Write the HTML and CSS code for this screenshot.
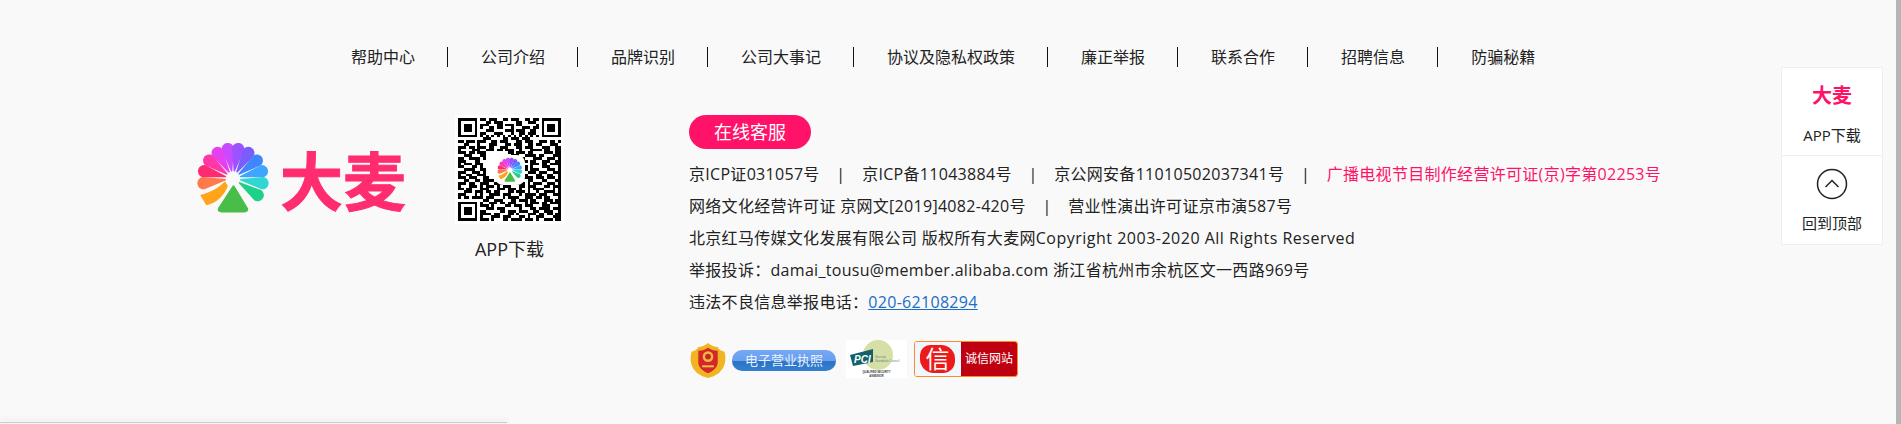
FILE: index.html
```html
<!DOCTYPE html>
<html lang="zh-CN">
<head>
    <meta charset="UTF-8">
    <meta name="viewport" content="width=device-width, initial-scale=1.0">
    <title>大麦网</title>
    <link rel="stylesheet" href="styles.css">
</head>
<body>
    <svg class="defs" width="0" height="0">
        <symbol id="fan" viewBox="-36 -35.500 73 71">
            <g id="petals">
                <path fill="#c94bff" transform="rotate(-10)" d="M-.6-7-6-29A6 6 0 0 1 6-29L.6-7Z"/>
                <path fill="#e43ff0" transform="rotate(-31)" d="M-.6-7-6-29A6 6 0 0 1 6-29L.6-7Z"/>
                <path fill="#ff38a8" transform="rotate(-53)" d="M-.6-7-6-29A6 6 0 0 1 6-29L.6-7Z"/>
                <path fill="#ff2a72" transform="rotate(-76)" d="M-.6-7-6-29A6 6 0 0 1 6-29L.6-7Z"/>
                <path fill="#ff7a4a" transform="rotate(-99)" d="M-.6-7-6-29A6 6 0 0 1 6-29L.6-7Z"/>
                <path fill="#9c52ff" transform="rotate(10)" d="M-.6-7-6-29A6 6 0 0 1 6-29L.6-7Z"/>
                <path fill="#7a5cff" transform="rotate(31)" d="M-.6-7-6-29A6 6 0 0 1 6-29L.6-7Z"/>
                <path fill="#3f86ff" transform="rotate(53)" d="M-.6-7-6-29A6 6 0 0 1 6-29L.6-7Z"/>
                <path fill="#3fa6ff" transform="rotate(76)" d="M-.6-7-6-29A6 6 0 0 1 6-29L.6-7Z"/>
                <path fill="#2fd6d2" transform="rotate(99)" d="M-.6-7-6-29A6 6 0 0 1 6-29L.6-7Z"/>
                <path fill="#1fd08a" transform="rotate(124)" d="M-.6-7-6-29A6 6 0 0 1 6-29L.6-7Z"/>
            </g>
            <path fill="#ffa41c" d="M-8 3C-14 9-22 14-32 16L-26 26C-16 24-8 16-5 7Z"/>
            <path fill="#49bd4a" d="M-1 8C0 6 1 6 2 8L14 28C16 31 14 33 11 33H-11C-14 33-16 31-14 28Z"/>
        </symbol>
    </svg>

    <nav class="top-links">
        <a>帮助中心</a><a>公司介绍</a><a>品牌识别</a><a>公司大事记</a><a>协议及隐私权政策</a><a>廉正举报</a><a>联系合作</a><a>招聘信息</a><a>防骗秘籍</a>
    </nav>

    <div class="footer-main">
        <div class="logo">
            <svg class="logo-fan"><use href="#fan"/></svg>
            <span class="logo-word">大麦</span>
        </div>

        <div class="app-code">
            <div class="qr">
                <svg id="qrCode" viewBox="0 0 37 37" shape-rendering="crispEdges"></svg>
                <div class="qr-center"><svg><use href="#fan"/></svg></div>
            </div>
            <p>APP下载</p>
        </div>

        <div class="info">
            <a class="service-btn">在线客服</a>
            <p>京ICP证031057号<span class="sep">|</span>京ICP备11043884号<span class="sep">|</span>京公网安备11010502037341号<span class="sep">|</span><span class="hot">广播电视节目制作经营许可证(京)字第02253号</span></p>
            <p>网络文化经营许可证 京网文[2019]4082-420号<span class="sep">|</span>营业性演出许可证京市演587号</p>
            <p>北京红马传媒文化发展有限公司 版权所有大麦网<span class="copyright">Copyright 2003-2020 All Rights Reserved</span></p>
            <p>举报投诉：damai_tousu@member.alibaba.com 浙江省杭州市余杭区文一西路969号</p>
            <p>违法不良信息举报电话：<a class="tel">020-62108294</a></p>

            <div class="badges">
                <div class="license">
                    <svg class="seal" viewBox="0 0 38 36">
                        <path fill="#f2b522" d="M19 0C22 3 26 4 29 4C30 7 33 8 36 9C38 17 37 25 30 31C26 34 22 35 19 36C16 35 12 34 8 31C1 25 0 17 2 9C5 8 8 7 9 4C12 4 16 3 19 0Z"/>
                        <path fill="#d3272a" d="M19 5C22 7 25 8 29 8V20C29 25 24 29 19 31C14 29 9 25 9 20V8C13 8 16 7 19 5Z"/>
                        <circle cx="19" cy="14" r="5.500" fill="#f0b840"/>
                        <circle cx="19" cy="14" r="3" fill="#c9242a"/>
                        <rect x="13" y="23" width="12" height="2" fill="#f3c24d"/>
                    </svg>
                    <span class="license-btn">电子营业执照</span>
                </div>
                <svg class="pci" viewBox="0 0 61 38">
                    <rect width="61" height="38" fill="#fff"/>
                    <circle cx="32" cy="15" r="15" fill="#d5dfa6"/>
                    <path fill="#14606a" d="M4 15 27 9 27 22 7 26Z"/>
                    <text x="8" y="23" class="pci-mark">PCI</text>
                    <text x="29" y="18" class="pci-small">Security</text>
                    <text x="29" y="22" class="pci-small">Standards Council</text>
                    <text x="30.500" y="33" text-anchor="middle" class="pci-note">QUALIFIED SECURITY</text>
                    <text x="30.500" y="37" text-anchor="middle" class="pci-note">ASSESSOR</text>
                </svg>
                <div class="trust">
                    <div class="trust-mark"><span>信</span></div>
                    <span class="trust-name">诚信网站</span>
                </div>
            </div>
        </div>
    </div>

    <aside class="side-bar">
        <div class="side-item">
            <strong>大麦</strong>
            <span>APP下载</span>
        </div>
        <div class="side-item">
            <svg class="to-top" viewBox="0 0 32 32">
                <circle cx="16" cy="16" r="14.500" fill="none" stroke="#222" stroke-width="1.500"/>
                <path d="M9.500 19 16 12.500 22.500 19" fill="none" stroke="#222" stroke-width="1.500"/>
            </svg>
            <span>回到顶部</span>
        </div>
    </aside>

    <div class="scroll-thumb"></div>
    <div class="bottom-edge"></div>

    <script src="qr.js"></script>
</body>
</html>
```

FILE: styles.css
```css
* {
    box-sizing: border-box;
}

html, body {
    height: 424px;
    overflow: hidden;
}

body {
    margin: 0;
    background-color: #f9f9f9;
    color: #222;
    font-family: "Open Sans", "Noto Sans CJK SC", sans-serif;
}

p {
    margin: 0;
}

.defs {
    display: block;
    height: 0;
}

.top-links {
    display: flex;
    padding: 47px 0 0 318px;
    font-size: 16px;
    line-height: 20px;
}

.top-links a {
    padding: 0 32px 0 33px;
    border-right: 1px solid #111;
    height: 20px;
}

.top-links a:last-child {
    border-right: none;
}

.footer-main {
    display: flex;
    padding: 48px 0 0 196px;
}

.logo {
    display: flex;
    align-items: center;
    width: 210px;
    height: 68px;
    margin-top: 29px;
    gap: 9px;
}

.logo-fan {
    width: 75px;
    height: 73px;
    flex: none;
}

.logo-word {
    color: #ff2d6f;
    font-family: "Noto Sans CJK SC", sans-serif;
    font-size: 63px;
    font-weight: 700;
    line-height: 68px;
    white-space: nowrap;
    -webkit-text-stroke: 1px #ff2d6f;
}

.app-code {
    width: 109px;
    margin-left: 49px;
    text-align: center;
    font-size: 18px;
}

.qr {
    position: relative;
    width: 109px;
    height: 109px;
    padding: 3px;
    background-color: #fff;
}

.qr svg {
    display: block;
    width: 103px;
    height: 103px;
}

.qr-center {
    position: absolute;
    left: 40px;
    top: 40px;
    width: 30px;
    height: 30px;
    padding: 2px;
    border-radius: 8px;
    background-color: #fff;
}

.qr-center svg {
    width: 26px;
    height: 26px;
}

.app-code p {
    margin-top: 13px;
    line-height: 24px;
    white-space: nowrap;
}

.info {
    margin-left: 125px;
    font-size: 16px;
    letter-spacing: 0.3px;
    line-height: 32px;
    white-space: nowrap;
}

.service-btn {
    display: block;
    width: 122px;
    height: 34px;
    margin-bottom: 9px;
    border-radius: 17px;
    background-color: #ff1268;
    color: #fff;
    font-size: 18px;
    letter-spacing: 0;
    line-height: 34px;
    text-align: center;
}

.sep {
    margin: 0 16.700px;
}

.hot {
    color: #ff1268;
}

.copyright {
    letter-spacing: 0.5px;
}

.tel {
    color: #1a6dca;
    text-decoration: underline;
}

.badges {
    display: flex;
    align-items: center;
    margin-top: 21px;
    letter-spacing: 0;
    line-height: 1;
}

.license {
    display: flex;
    align-items: center;
    width: 148px;
    padding-top: 4px;
}

.seal {
    width: 38px;
    height: 35px;
    flex: none;
}

.license-btn {
    width: 104px;
    height: 21px;
    margin-left: 5px;
    border-radius: 10px;
    background: linear-gradient(to bottom, #74a8f5 0, #6a9ff0 50%, #2a74c6 55%, #3480d0 100%);
    color: #e8f0fb;
    font-size: 13px;
    line-height: 21px;
    text-align: center;
}

.pci {
    width: 61px;
    height: 38px;
    margin-left: 9px;
}

.pci-mark {
    fill: #fff;
    font: italic 700 10px "Liberation Sans", sans-serif;
}

.pci-small {
    fill: #5b8a8c;
    font: 3px "Liberation Sans", sans-serif;
}

.pci-note {
    fill: #333;
    font: 700 2.600px "Liberation Sans", sans-serif;
}

.trust {
    display: flex;
    width: 104px;
    height: 36px;
    margin-left: 7px;
    border: 1px solid #ff8a2a;
    border-radius: 3px;
    overflow: hidden;
}

.trust-mark {
    width: 46px;
    padding: 3px 0 0 5px;
    background-color: #f1f7fd;
}

.trust-mark span {
    display: block;
    width: 35px;
    height: 28px;
    border-radius: 10px 14px 12px 14px;
    background-color: #ec1a1a;
    color: #fff;
    font-size: 24px;
    line-height: 28px;
    text-align: center;
}

.trust-name {
    flex: 1;
    background-color: #bf0010;
    color: #fff;
    font-size: 12px;
    line-height: 34px;
    text-align: center;
}

.side-bar {
    position: absolute;
    top: 67px;
    right: 18px;
    width: 102px;
    border: 1px solid #eee;
    background-color: #fff;
    font-size: 15px;
    text-align: center;
}

.side-item {
    display: flex;
    flex-direction: column;
    align-items: center;
    height: 88px;
}

.side-item:first-child {
    border-bottom: 1px solid #eee;
    padding-top: 13px;
}

.side-item:last-child {
    padding-top: 12px;
}

.side-item strong {
    color: #ff1268;
    font-family: "Noto Sans CJK SC", sans-serif;
    font-size: 20px;
    line-height: 28px;
}

.side-item:first-child span {
    margin-top: 16px;
    line-height: 20px;
}

.to-top {
    width: 32px;
    height: 32px;
}

.side-item:last-child span {
    margin-top: 13px;
    line-height: 20px;
}

.scroll-thumb {
    position: absolute;
    top: 0;
    right: 0;
    width: 5px;
    height: 424px;
    background-color: #b5b5b5;
}

.bottom-edge {
    position: absolute;
    left: 0;
    bottom: 0;
    width: 507px;
    height: 2px;
    border-top: 1px solid #ccc;
    background-color: #f4f4f4;
    box-shadow: 0 -2px 6px rgba(0, 0, 0, 0.1);
}
```

FILE: qr.js
```js
// QR modules, one string per row
const rows = [
    "#######.##.###..##.###..##.##.#######",
    "#.....#...##.###.....##..###..#.....#",
    "#.###.#.###...##.###.##.....#.#.###.#",
    "#.###.#.#..##.##...#...###.##.#.###.#",
    "#.###.#...###....###.###..##..#.###.#",
    "#.....#.##...###...#..##.###..#.....#",
    "#######.#.#.#.#.#.#.#.#.#.#.#.#######",
    ".........###....##.###.###...........",
    "##.###.###..##.###...##.###..###.##.#",
    "..##...#...###...##.###..##.##...###.",
    "###.##.###.##..###...##.###...###..##",
    "#....###..###.##.###..#...####.##..##",
    "###.##.###........##.###.##....###.##",
    "..###...##.........###..####.##...###",
    "##..####.#.........##.##...###..###.#",
    "###...##...........#..###.##..###..##",
    "#.###.###...........###...###.##.####",
    "##...##.#...........#.###.#...###...#",
    "..####..##.........###.##.###...###.#",
    "###..###.#.........##....###.###..###",
    "#..##..###........###.###...##..##..#",
    "###.###..##......##.#..####.###.###.#",
    "..##..##.####...###.##...##...##...##",
    "###.##..###..###..##.###.#.###..###.#",
    "#...###.#.###.#.###...##.###...##.###",
    "##.##...###...###.###.#..#.####...#.#",
    "..###.###.##.##...##.###.#..#..####.#",
    "###...#.#..####.###...#.####.###..###",
    "#.##.####.###...#.####..###.##.##...#",
    ".........##..###...##.###.##...###.##",
    "#######.#..###.##.###...#.###.##.####",
    "#.....#.###.#....##.###.###...###...#",
    "#.###.#...###.###.....#...##.####.###",
    "#.###.#.##.....##.###.###..##..###..#",
    "#.###.#.####.##...##.#...###.##.##.##",
    "#.....#.#...###.###...##.#..###...###",
    "#######.###.#...##.####.###.#..###.##"
];

let d = "";
rows.forEach((row, y) => {
    [...row].forEach((cell, x) => {
        if (cell === "#") d += `M${x} ${y}h1v1h-1z`;
    });
});

const path = document.createElementNS("http://www.w3.org/2000/svg", "path");
path.setAttribute("d", d);
document.getElementById("qrCode").appendChild(path);
```
